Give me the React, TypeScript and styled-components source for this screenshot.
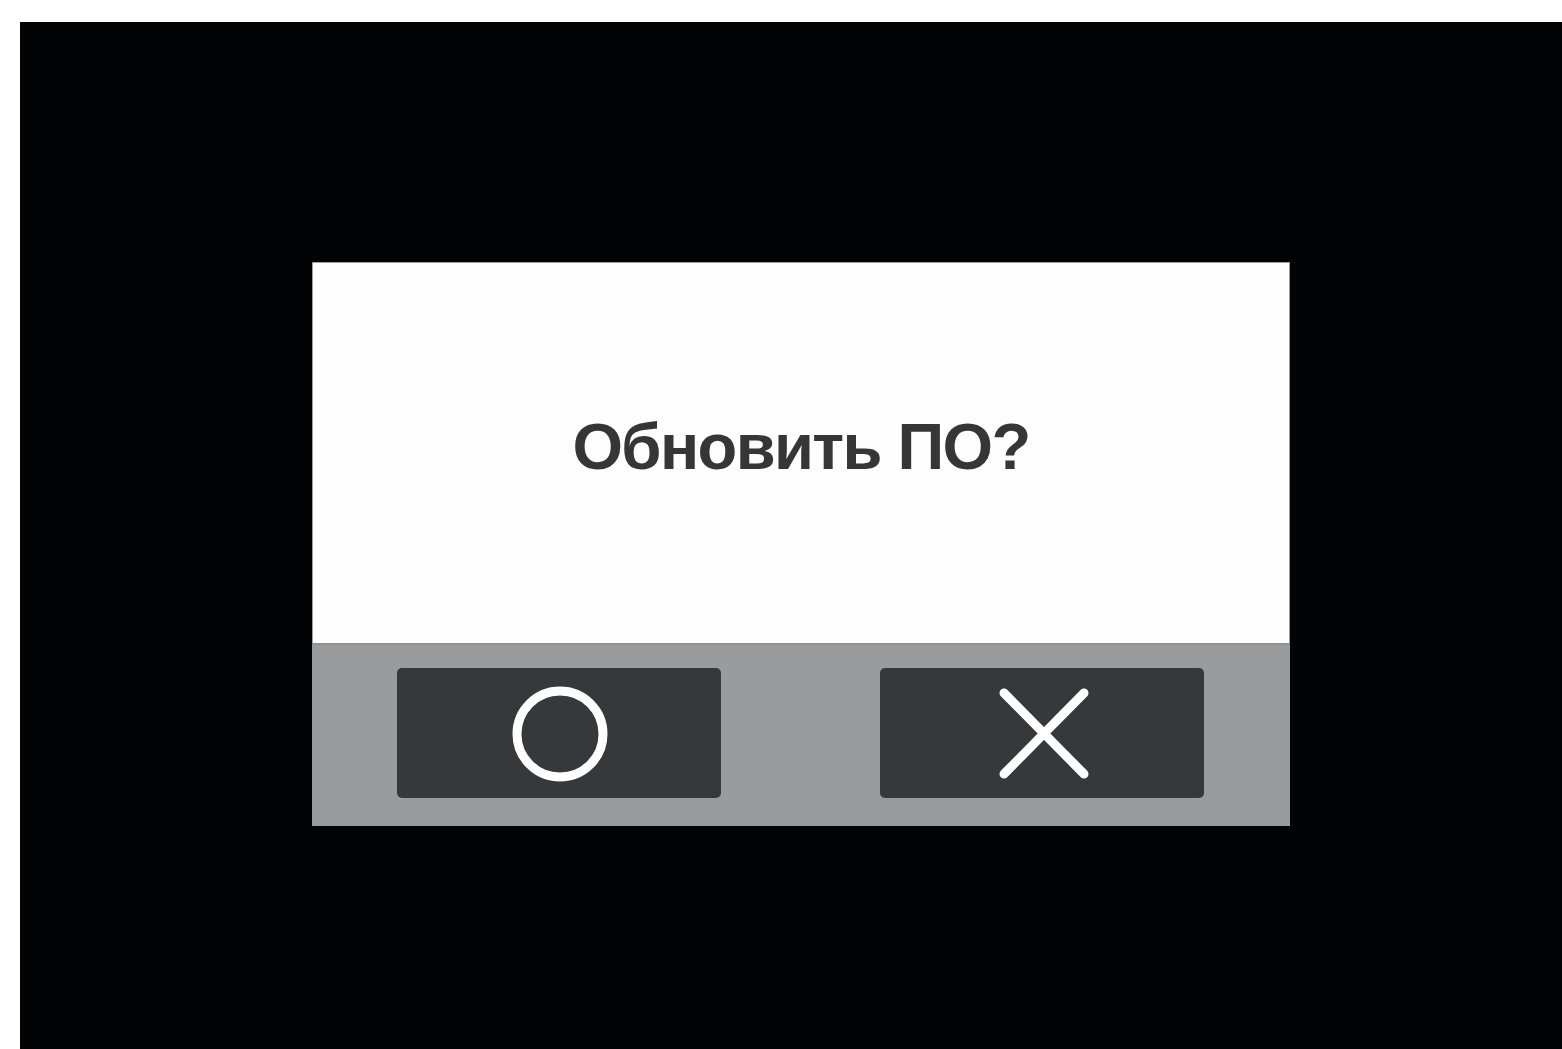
import React from 'react';
import styled, { createGlobalStyle } from 'styled-components';

const GlobalStyle = createGlobalStyle`
  html, body {
    margin: 0;
    padding: 0;
    background: #ffffff;
    font-family: 'Liberation Sans', Arial, sans-serif;
  }
`;

const Screen = styled.div`
  margin: 22px 0 0 20px;
  height: 1027px;
  background: #020305;
  padding: 240px 0 0 292px;
  box-sizing: border-box;
`;

const Dialog = styled.div`
  width: 978px;
  height: 564px;
  display: flex;
  flex-direction: column;
  background: #fdfdfd;
  box-shadow: 0 0 0 1px #9a9c9e inset;
`;

const Message = styled.div`
  flex: 1;
  display: flex;
  align-items: center;
  justify-content: center;
  padding-bottom: 12px;
  font-size: 65px;
  font-weight: 700;
  letter-spacing: -1.6px;
  color: #363636;
`;

const ButtonBar = styled.div`
  height: 183px;
  box-sizing: border-box;
  display: flex;
  justify-content: space-between;
  padding: 23px 86px 0 85px;
  background: #9a9b9d;
  border-top: 2px solid #8e9092;
`;

const ActionButton = styled.button`
  width: 324px;
  height: 130px;
  border: none;
  border-radius: 5px;
  background: #35393c;
  display: flex;
  align-items: center;
  justify-content: center;
  padding: 0;
  cursor: pointer;
`;

const ConfirmIcon = () => (
  <svg width="100" height="100" viewBox="0 0 100 100">
    <circle cx="51" cy="51" r="43" fill="none" stroke="#ffffff" strokeWidth="9" />
  </svg>
);

const CancelIcon = () => (
  <svg width="100" height="100" viewBox="0 0 100 100">
    <path
      d="M12 10 L92 91 M92 10 L12 91"
      stroke="#ffffff"
      strokeWidth="9"
      strokeLinecap="round"
      fill="none"
    />
  </svg>
);

export default function App() {
  return (
    <>
      <GlobalStyle />
      <Screen>
        <Dialog>
          <Message>Обновить ПО?</Message>
          <ButtonBar>
            <ActionButton aria-label="Да">
              <ConfirmIcon />
            </ActionButton>
            <ActionButton aria-label="Нет">
              <CancelIcon />
            </ActionButton>
          </ButtonBar>
        </Dialog>
      </Screen>
    </>
  );
}
